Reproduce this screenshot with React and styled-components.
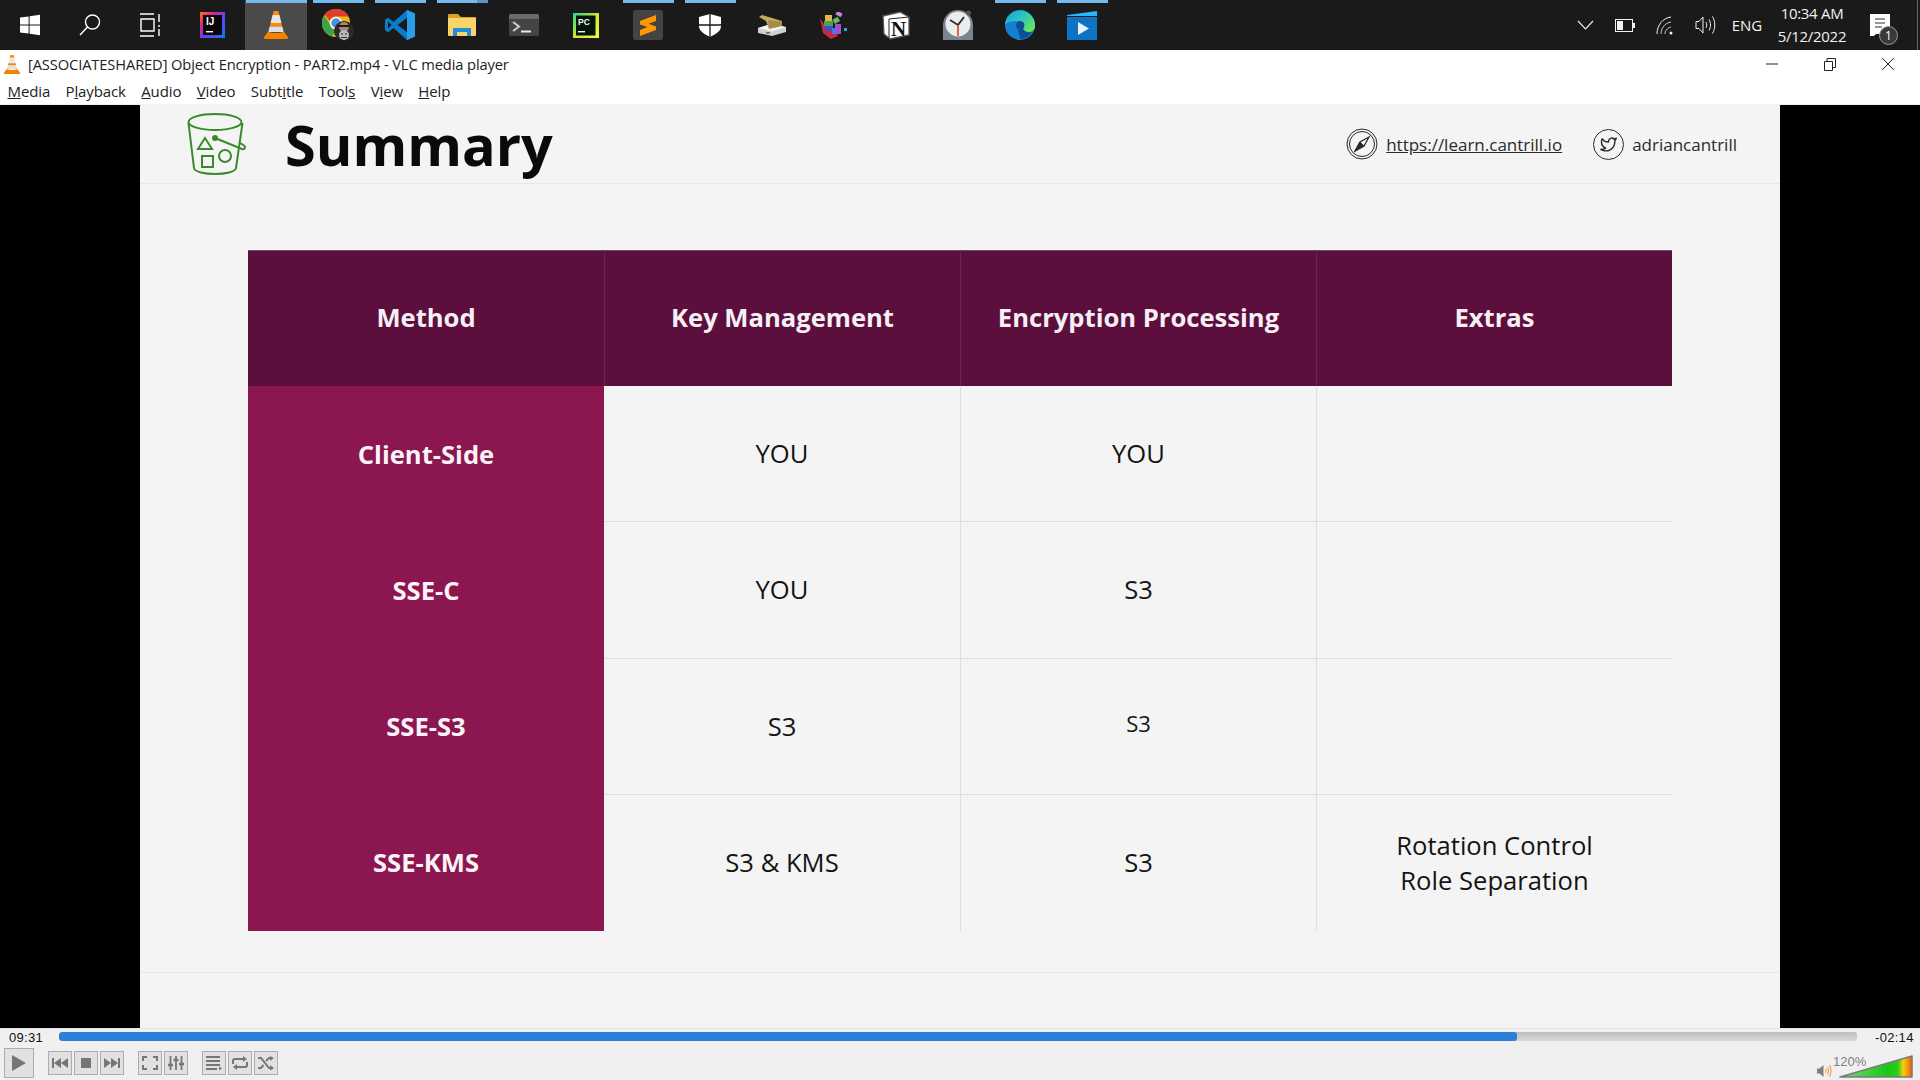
import React from "react";
import styled, { createGlobalStyle } from "styled-components";
import { FiTwitter } from "react-icons/fi";

const GlobalStyle = createGlobalStyle`
  html, body {
    margin: 0;
    padding: 0;
    width: 1920px;
    height: 1080px;
    overflow: hidden;
    background: #000;
    font-family: "Open Sans", "Noto Sans", sans-serif;
  }
`;

const Screen = styled.div`
  width: 1920px;
  height: 1080px;
  display: flex;
  flex-direction: column;
`;

/* ---------- windows taskbar ---------- */

const Taskbar = styled.div`
  height: 50px;
  flex: none;
  display: flex;
  background: #1a1a1a;
  color: #f2f2f2;
`;

const TaskSlot = styled.div`
  position: relative;
  flex: none;
  width: ${p => p.$w || 62}px;
  height: 50px;
  display: flex;
  align-items: center;
  justify-content: center;
  background: ${p => p.$active ? "#4a4a4a" : "transparent"};

  &::before {
    content: "";
    display: ${p => p.$running ? "block" : "none"};
    position: absolute;
    top: 0;
    left: ${p => p.$active ? 1 : 6}px;
    right: ${p => p.$active ? 0 : 5}px;
    height: 3px;
    background: ${p => p.$stacked
      ? "linear-gradient(90deg, #76b9ed 78%, #5a94c4 78%)"
      : "#76b9ed"};
  }
`;

const TaskSpacer = styled.div`
  flex: 1;
`;

const TrayItem = styled.div`
  flex: none;
  width: ${p => p.$w || 40}px;
  height: 50px;
  display: flex;
  align-items: center;
  justify-content: center;
  font-size: 15px;
`;

const Clock = styled.div`
  flex: none;
  width: 86px;
  display: flex;
  flex-direction: column;
  align-items: center;
  justify-content: center;
  font-size: 15px;
  line-height: 23px;
  letter-spacing: -0.3px;
`;

const TrayEnd = styled.div`
  flex: none;
  width: 1px;
  margin-left: 17px;
  margin-right: 2px;
  background: #666;
`;

const NotifyBadge = styled.span`
  position: absolute;
  right: 2px;
  bottom: 5px;
  width: 19px;
  height: 19px;
  border-radius: 50%;
  border: 1px solid #999;
  box-sizing: border-box;
  background: #3a3a3a;
  color: #fff;
  font-size: 12px;
  line-height: 17px;
  text-align: center;
`;

const NotifyWrap = styled.div`
  position: relative;
  width: 40px;
  height: 50px;
  flex: none;
  display: flex;
  align-items: center;
  justify-content: center;
  margin-left: 5px;
`;

const IconLabel = styled.text`
  font-family: "Liberation Sans", sans-serif;
  font-weight: 700;
`;

const WindowsIcon = () => (
  <svg width="22" height="22" viewBox="0 0 22 22" fill="#fff">
    <path d="M1 3.600 9.600 2.400v8H1zM10.600 2.300 21 .8v9.600H10.600zM1 11.500h8.600v8.100L1 18.400zM10.600 11.500H21v9.700l-10.400-1.500z" />
  </svg>
);

const SearchIcon = () => (
  <svg width="24" height="24" viewBox="0 0 24 24" fill="none" stroke="#fff" strokeWidth="1.400">
    <circle cx="14.500" cy="9" r="7" />
    <path d="M9.500 14 2 22" />
  </svg>
);

const TaskViewIcon = () => (
  <svg width="24" height="24" viewBox="0 0 24 24" fill="none" stroke="#fff" strokeWidth="1.400">
    <path d="M2 1h14M2 23h14M3 6h13v12H3zM21 1v8M21 12v2M21 16v7" />
  </svg>
);

const IdeaIcon = () => (
  <svg width="25" height="26" viewBox="0 0 25 26">
    <defs>
      <linearGradient id="ij" x1="0" y1="0" x2="1" y2="1">
        <stop offset="0" stopColor="#f97a12" />
        <stop offset="0.250" stopColor="#e8287a" />
        <stop offset="0.550" stopColor="#6a3df0" />
        <stop offset="1" stopColor="#087cfa" />
      </linearGradient>
    </defs>
    <rect width="25" height="26" fill="url(#ij)" />
    <rect x="3" y="3" width="19" height="20" fill="#0a0508" />
    <IconLabel x="6" y="13" fontSize="10" fill="#fff">IJ</IconLabel>
    <rect x="6" y="19" width="7" height="1.400" fill="#fff" />
  </svg>
);

const VlcIcon = ({ width = 26, height = 28 }) => (
  <svg width={width} height={height} viewBox="0 0 26 28">
    <path d="M10.700 0h4.600l1.200 4H9.500z" fill="#ff8800" />
    <path d="M9.500 4h7l1.900 8H7.600z" fill="#e6e6e6" />
    <path d="M7.600 12h10.800l.9 3.500H6.700z" fill="#ff8800" />
    <path d="M6.700 15.500h12.600l1.400 5.500H5.300z" fill="#e0e0e0" />
    <path d="M5.300 20.500 1 26c-.5.800 0 2 1 2h22c1 0 1.500-1.200 1-2l-4.300-5.500c-3 2-12.400 2-15.400 0z" fill="#f58300" />
  </svg>
);

const ChromeIcon = () => (
  <svg width="32" height="32" viewBox="0 0 32 32">
    <circle cx="14" cy="14" r="14" fill="#e8b90f" />
    <path d="M14 0a14 14 0 0 1 12.500 7.500H14a6.500 6.500 0 0 0-6 4.500L2.500 5.500A14 14 0 0 1 14 0z" fill="#e13c2e" />
    <path d="M2 6.500a14 14 0 0 0 8 21l5-7a6.500 6.500 0 0 1-7.500-6z" fill="#3ca24c" />
    <circle cx="14" cy="14" r="5.500" fill="#4a90e2" stroke="#fff" strokeWidth="1.500" />
    <circle cx="22" cy="22" r="10" fill="#2a2a2a" />
    <ellipse cx="22" cy="18" rx="5" ry="5" fill="#a98670" />
    <path d="M16 17h12" stroke="#1c1c1c" strokeWidth="2" />
    <ellipse cx="22" cy="26" rx="5" ry="5" fill="#b8b8b8" />
    <path d="M19 25h2M23 25h2M19 28.500h6" stroke="#333" strokeWidth="1.200" />
  </svg>
);

const VsCodeIcon = () => (
  <svg width="30" height="30" viewBox="0 0 30 30">
    <path d="M22 0l8 3.500v23L22 30 8.500 18 3 22.200 0 20.300V9.700L3 7.800 8.500 12z" fill="#0a7acb" />
    <path d="M22 8 12.500 15 22 22z" fill="#1a1a1a" />
    <path d="M3 11.500 6.500 15 3 18.500z" fill="#1a1a1a" />
    <path d="M22 0l8 3.500v23L22 30z" fill="#2a9ee8" />
    <path d="M22 8v14l-3-2.200V10.200z" fill="#1a1a1a" />
  </svg>
);

const FolderIcon = () => (
  <svg width="28" height="22" viewBox="0 0 28 22">
    <path d="M0 1a1 1 0 0 1 1-1h9l3 3h15v3H0z" fill="#d9a321" />
    <path d="M0 4h28v17a1 1 0 0 1-1 1H1a1 1 0 0 1-1-1z" fill="#fbd468" />
    <path d="M5 22v-8h18v8h-4v-4h-10v4z" fill="#1f8fdc" />
  </svg>
);

const TerminalIcon = () => (
  <svg width="30" height="22" viewBox="0 0 30 22">
    <rect width="30" height="22" rx="2" fill="#444" />
    <path d="M0 5V2a2 2 0 0 1 2-2h26a2 2 0 0 1 2 2v3z" fill="#6a6a6a" />
    <path d="M4 8l6 4.500L4 17" fill="none" stroke="#cfcfcf" strokeWidth="2" />
    <path d="M12 17.500h10" stroke="#e8e8e8" strokeWidth="2" />
  </svg>
);

const PyCharmIcon = () => (
  <svg width="26" height="25" viewBox="0 0 26 25">
    <defs>
      <linearGradient id="pc" x1="0" y1="0" x2="1" y2="1">
        <stop offset="0" stopColor="#21d789" />
        <stop offset="0.5" stopColor="#c8e83a" />
        <stop offset="1" stopColor="#fcf84a" />
      </linearGradient>
    </defs>
    <rect width="26" height="25" fill="url(#pc)" />
    <rect x="3" y="2.500" width="19.500" height="20" fill="#03140e" />
    <IconLabel x="5" y="12" fontSize="8.500" fill="#e8ffe8">PC</IconLabel>
    <rect x="5" y="18" width="7" height="1.400" fill="#fff" />
  </svg>
);

const SublimeIcon = () => (
  <svg width="30" height="30" viewBox="0 0 30 30">
    <rect width="30" height="30" rx="2.500" fill="#444" />
    <path d="M7 11 23 5v6l-7.500 2.700L23 16.500V20L7 26v-6l7.500-3L7 14.500z" fill="#ff9800" />
  </svg>
);

const ShieldIcon = () => (
  <svg width="22" height="23" viewBox="0 0 22 23">
    <path d="M0 3 11 0l11 3v9c0 5-5 8-11 11C5 20 0 17 0 12z" fill="#fff" />
    <path d="M11 0v23M0 11h22" stroke="#1a1a1a" strokeWidth="1.300" />
  </svg>
);

const DriveIcon = () => (
  <svg width="28" height="21" viewBox="0 0 28 21">
    <path d="M0 13 13 9l15 3v5L14 21 0 18z" fill="#d0d0d0" />
    <path d="M0 13l14 3.500L28 12 13 9z" fill="#f2f2f2" />
    <path d="M1 2 4 0l20 6v5l-13 3-3-8z" fill="#c9a860" />
    <path d="M10 5l14 1.500V11l-13 2.500z" fill="#a88c4a" />
    <rect x="8" y="17" width="4" height="1.600" fill="#2c8e4f" />
  </svg>
);

const BlocksIcon = () => (
  <svg width="28" height="27" viewBox="0 0 28 27">
    <path d="M0 6 3 21l8 6 7-3-2-4-9-3z" fill="#c7293f" />
    <rect x="5" y="3" width="7" height="6" fill="#e6b54a" />
    <rect x="4" y="9" width="9" height="5" fill="#44a453" />
    <rect x="5" y="14" width="8" height="5" fill="#3355cc" />
    <rect x="12" y="16" width="6" height="6" fill="#2f88dd" />
    <rect x="13" y="6" width="6" height="5" fill="#70b85d" transform="rotate(-30 16 8)" />
    <rect x="15" y="12" width="6" height="10" fill="#a14fd4" />
    <rect x="16" y="0" width="6" height="4" fill="#c884e4" transform="rotate(30 19 2)" />
    <rect x="24" y="16" width="3" height="3" fill="#19b6c9" />
  </svg>
);

const NotionIcon = () => (
  <svg width="28" height="29" viewBox="0 0 28 29">
    <path d="M1 5 18 1l9 5v18L8 28l-6-5z" fill="#fff" stroke="#555" strokeWidth="1.300" />
    <path d="M7 8l20-2M7 8v20" stroke="#222" strokeWidth="1" fill="none" />
    <text x="9" y="25" fontFamily="Liberation Serif, serif" fontWeight="700" fontSize="21" fill="#111">N</text>
  </svg>
);

const ClockIcon = () => (
  <svg width="30" height="30" viewBox="0 0 30 30">
    <path d="M0 30V15a15 15 0 0 1 30 0v15z" fill="#7a8590" />
    <circle cx="25.500" cy="3" r="2.500" fill="#555" />
    <circle cx="15" cy="14" r="12.500" fill="#ececec" />
    <path d="M15 15 7 10M15 15l6-8" stroke="#333" strokeWidth="2" />
    <path d="M15 15v11" stroke="#d8401a" strokeWidth="1.600" />
  </svg>
);

const EdgeIcon = () => (
  <svg width="30" height="30" viewBox="0 0 30 30">
    <defs>
      <linearGradient id="edgeTop" x1="0" y1="0" x2="1" y2="0.700">
        <stop offset="0" stopColor="#1b9de2" />
        <stop offset="0.550" stopColor="#2dc6c0" />
        <stop offset="1" stopColor="#6ae35c" />
      </linearGradient>
    </defs>
    <circle cx="15" cy="15" r="15" fill="#1580cf" />
    <path d="M0 15a15 15 0 0 1 30 1c0 4-3 6-7 6-3 0-5-1-5-3 2-3-1-8-6-8-6 0-11 2-12 4z" fill="url(#edgeTop)" />
    <path d="M18 19c-2 2-7 1-7-4 0-2 2-4 4-4 4 0 6 4 3 8 2 3 6 4 9 3-3 5-8 7-12 7 0-6-3-9-3-9 2 1 4 0 6-1z" fill="#0c4f94" />
  </svg>
);

const MediaIcon = () => (
  <svg width="30" height="29" viewBox="0 0 30 29">
    <path d="M0 4 30 0v5H0z" fill="#29b6f6" />
    <rect y="6" width="30" height="23" fill="#0f73c4" />
    <path d="M11 11l11 6.500L11 24z" fill="#e8f2fa" />
  </svg>
);

const ChevronIcon = () => (
  <svg width="17" height="10" viewBox="0 0 17 10" fill="none" stroke="#f2f2f2" strokeWidth="1.100">
    <path d="M1 1l7.500 8L16 1" />
  </svg>
);

const BatteryIcon = () => (
  <svg width="20" height="13" viewBox="0 0 20 13">
    <rect x=".5" y=".5" width="17" height="12" fill="none" stroke="#f2f2f2" />
    <rect x="2" y="2" width="6" height="9" fill="#f2f2f2" />
    <rect x="18" y="4" width="2" height="5" fill="#f2f2f2" />
  </svg>
);

const WifiIcon = () => (
  <svg width="18" height="19" viewBox="0 0 18 19" fill="none" stroke="#f2f2f2" strokeWidth="1">
    <path d="M1 18C1 9 7 2 15 1" />
    <path d="M5 18c0-6 4-11 10-12" opacity=".8" />
    <path d="M9 18c0-3 2-6 6-7" opacity=".8" />
    <circle cx="15" cy="17" r="1.500" fill="#f2f2f2" stroke="none" />
  </svg>
);

const SpeakerIcon = () => (
  <svg width="21" height="20" viewBox="0 0 21 20" fill="none" stroke="#f2f2f2" strokeWidth="1">
    <path d="M1 6.500h3L8 2v16l-4-4.500H1z" />
    <path d="M11 7c1 2 1 4 0 6M14 4.500c2 3.500 2 7.500 0 11M17.500 1.500c3 5 3 12 0 17" />
  </svg>
);

const NotifyIcon = () => (
  <svg width="21" height="22" viewBox="0 0 21 22">
    <path d="M0 0h20v20H6l-2 2H0z" fill="#fff" />
    <path d="M5 5h10M5 9h10M5 13h7" stroke="#333" strokeWidth="1.200" />
  </svg>
);

const taskIcons = [
  { key: "vlc", Icon: VlcIcon, active: true },
  { key: "chrome", Icon: ChromeIcon, running: true },
  { key: "vscode", Icon: VsCodeIcon, running: true },
  { key: "folder", Icon: FolderIcon, running: true, stacked: true },
  { key: "terminal", Icon: TerminalIcon },
  { key: "pycharm", Icon: PyCharmIcon },
  { key: "sublime", Icon: SublimeIcon, running: true },
  { key: "shield", Icon: ShieldIcon, running: true },
  { key: "drive", Icon: DriveIcon },
  { key: "blocks", Icon: BlocksIcon },
  { key: "notion", Icon: NotionIcon },
  { key: "clock", Icon: ClockIcon },
  { key: "edge", Icon: EdgeIcon, running: true },
  { key: "media", Icon: MediaIcon, running: true },
];

/* ---------- vlc window chrome ---------- */

const TitleBar = styled.div`
  height: 28px;
  flex: none;
  display: flex;
  align-items: center;
  background: #fff;
  color: #222;
  font-size: 14.7px;
  letter-spacing: -0.12px;
`;

const TitleLogo = styled.div`
  width: 28px;
  flex: none;
  display: flex;
  justify-content: center;
  padding-right: 4px;
  box-sizing: border-box;
`;

const WindowButtons = styled.div`
  margin-left: auto;
  padding-right: 3px;
  display: flex;
`;

const WindowButton = styled.div`
  width: 58px;
  height: 28px;
  display: flex;
  align-items: center;
  justify-content: center;
`;

const MenuBar = styled.div`
  height: 27px;
  flex: none;
  display: flex;
  align-items: center;
  gap: 15.4px;
  padding-left: 7.5px;
  box-sizing: border-box;
  background: #fff;
  border-bottom: 1px solid #f0f0f0;
  color: #222;
  font-size: 15px;
  letter-spacing: -0.12px;
`;

const MenuItem = styled.span``;

const menuItems = [
  ["", "M", "edia"],
  ["P", "l", "ayback"],
  ["", "A", "udio"],
  ["", "V", "ideo"],
  ["Subt", "i", "tle"],
  ["Tool", "s", ""],
  ["V", "i", "ew"],
  ["", "H", "elp"],
];

/* ---------- slide ---------- */

const VideoArea = styled.div`
  flex: 1;
  min-height: 0;
  display: flex;
  justify-content: center;
  background: #000;
`;

const Slide = styled.div`
  width: 1640px;
  display: flex;
  flex-direction: column;
  background: #f4f4f4;
`;

const SlideHeader = styled.header`
  height: 78px;
  flex: none;
  display: flex;
  align-items: center;
  padding-left: 47px;
  padding-right: 43px;
  border-bottom: 1px solid #e8e8e8;
`;

const SlideTitle = styled.h1`
  margin: 0 0 0 38px;
  font-size: 55.8px;
  line-height: 78px;
  font-weight: 700;
  color: #0a0a0a;
`;

const HeaderLinks = styled.div`
  margin-left: auto;
  display: flex;
  align-items: center;
  font-size: 17px;
  color: #2a2a2a;
`;

const HeaderLink = styled.span`
  display: flex;
  align-items: center;
  gap: 8px;
  margin-left: 31px;
`;

const LinkText = styled.span`
  text-decoration: ${p => p.$underline ? "underline" : "none"};
`;

const RoundIcon = styled.span`
  width: 31px;
  height: 31px;
  box-sizing: border-box;
  flex: none;
  border: 1.5px solid #2a2a2a;
  border-radius: 50%;
  display: flex;
  align-items: center;
  justify-content: center;
  font-size: 17px;
`;

const SummaryTable = styled.div`
  display: grid;
  grid-template-columns: repeat(4, 356px);
  grid-template-rows: repeat(5, 136.2px);
  margin: 66px 0 0 108px;
  flex: none;
`;

const HeadCell = styled.div`
  display: flex;
  align-items: center;
  justify-content: center;
  padding-bottom: 2px;
  box-sizing: border-box;
  background: #5c0f3d;
  color: #f6f0f4;
  font-size: 25.6px;
  font-weight: 700;
  border-left: ${p => p.$first ? "none" : "1px solid #6c2450"};
  border-top: 1px solid #6b5060;
`;

const MethodCell = styled.div`
  display: flex;
  align-items: center;
  justify-content: center;
  background: #8c1650;
  color: #fbf3f7;
  font-size: 25.6px;
  font-weight: 700;
`;

const BodyCell = styled.div`
  display: flex;
  flex-direction: column;
  align-items: center;
  justify-content: center;
  color: #141414;
  font-size: ${p => p.$small ? 22 : 25.6}px;
  line-height: 35px;
  padding-bottom: ${p => p.$small ? 6 : 0}px;
  border-left: ${p => p.$first ? "none" : "1px solid #dedede"};
  border-bottom: ${p => p.$lastRow ? "none" : "1px solid #dedede"};
`;

const SlideFooterLine = styled.div`
  margin-top: 41px;
  border-top: 1px solid #e8e8e8;
`;

const BucketIcon = () => (
  <svg width="60" height="64" viewBox="-1 -1 60 64" fill="none" stroke="#3a8a2c" strokeWidth="2">
    <ellipse cx="27" cy="9" rx="26.500" ry="8" />
    <path d="M.500 10 6 55c1 8 41 8 42 0l6.500-45" />
    <path d="M17 25l-7 11h14z" />
    <rect x="14" y="43" width="11" height="11" />
    <circle cx="37" cy="43" r="6" />
    <circle cx="27" cy="25" r="2" fill="#3a8a2c" />
    <path d="M27 25l27 11c3 1 4-2 2-3.500l-4-2.500" />
  </svg>
);

const CompassIcon = () => (
  <svg width="32" height="32" viewBox="0 0 32 32" fill="none" stroke="#2a2a2a" strokeWidth="1">
    <circle cx="16" cy="16" r="15" />
    <circle cx="16" cy="16" r="12.500" />
    <path d="M23 9l-9 5-5 9 9-5z" strokeWidth="1.300" />
    <path d="M14 14l4 4-9 5z" fill="#2a2a2a" />
  </svg>
);

const rows = [
  { method: "Client-Side", key: "YOU", processing: "YOU" },
  { method: "SSE-C", key: "YOU", processing: "S3" },
  { method: "SSE-S3", key: "S3", processing: "S3", small: true },
  { method: "SSE-KMS", key: "S3 & KMS", processing: "S3", extras: ["Rotation Control", "Role Separation"] },
];

/* ---------- player controls ---------- */

const Controls = styled.div`
  height: 52px;
  flex: none;
  display: flex;
  flex-direction: column;
  background: #f0f0f0;
  border-top: 1px solid #e4e4e4;
  box-sizing: border-box;
`;

const SeekRow = styled.div`
  height: 16px;
  flex: none;
  display: flex;
  align-items: center;
  font-size: 13px;
  color: #111;
  font-family: "Liberation Sans", sans-serif;
`;

const TimeLabel = styled.span`
  flex: none;
  width: ${p => p.$w}px;
  padding-left: ${p => p.$pad}px;
  box-sizing: border-box;
  letter-spacing: 0.3px;
`;

const SeekTrack = styled.div`
  flex: none;
  width: 1798px;
  height: 9px;
  margin-bottom: 1px;
  border-radius: 3px;
  background: linear-gradient(#bdbdbd, #d8d8d8);
  overflow: hidden;
`;

const SeekFill = styled.div`
  height: 100%;
  background: #2a7fd6;
  border-radius: 3px;
`;

const ButtonRow = styled.div`
  flex: 1;
  display: flex;
  align-items: flex-start;
  padding: 3px 0 0 4px;
`;

const PlayerButton = styled.div`
  flex: none;
  box-sizing: border-box;
  width: ${p => p.$big ? 30 : 24}px;
  height: ${p => p.$big ? 30 : 24}px;
  margin-top: ${p => p.$big ? 0 : 3}px;
  margin-right: ${p => p.$gap || 2}px;
  border: 1px solid #adadad;
  background: #e1e1e1;
  display: flex;
  align-items: center;
  justify-content: center;
`;

const VolumeWrap = styled.div`
  position: relative;
  margin-left: auto;
  margin-right: 7px;
  margin-top: 7px;
  display: flex;
  align-items: flex-end;
  gap: 7px;
`;

const VolumeText = styled.span`
  position: absolute;
  left: 16px;
  top: -1px;
  font-family: "Liberation Sans", sans-serif;
  font-size: 13px;
  color: #808080;
`;

const G = "#767676";

const PlayGlyph = () => <svg width="14" height="16" viewBox="0 0 14 16" fill={G}><path d="M0 0l14 8-14 8z" /></svg>;
const PrevGlyph = () => <svg width="16" height="10" viewBox="0 0 16 10" fill={G}><path d="M0 0h2v10H0zM2 5l7-5v10zM9 5l7-5v10z" /></svg>;
const StopGlyph = () => <svg width="10" height="10" viewBox="0 0 10 10" fill={G}><path d="M0 0h10v10H0z" /></svg>;
const NextGlyph = () => <svg width="16" height="10" viewBox="0 0 16 10" fill={G}><path d="M0 0l7 5-7 5zM7 0l7 5-7 5zM14 0h2v10h-2z" /></svg>;
const FullGlyph = () => (
  <svg width="16" height="14" viewBox="0 0 16 14" fill="none" stroke={G} strokeWidth="2">
    <path d="M1 5V1h4M11 1h4v4M15 9v4h-4M5 13H1V9" />
  </svg>
);
const ExtGlyph = () => (
  <svg width="16" height="14" viewBox="0 0 16 14" fill="none" stroke={G} strokeWidth="1.800">
    <path d="M2.500 0v14M8 0v14M13.500 0v14" />
    <path d="M0 9h5M5.500 4h5M11 8h5" strokeWidth="2.400" />
  </svg>
);
const ListGlyph = () => (
  <svg width="16" height="14" viewBox="0 0 16 14" fill={G}>
    <path d="M0 0h14v2H0zM0 4h14v2H0zM0 8h14v2H0zM0 12h11v2H0zM13 10.500l3 2-3 2z" />
  </svg>
);
const LoopGlyph = () => (
  <svg width="16" height="14" viewBox="0 0 16 14" fill="none" stroke={G} strokeWidth="2">
    <path d="M1 8V5a2 2 0 0 1 2-2h9M15 6v3a2 2 0 0 1-2 2H4" />
    <path d="M11 0l4 3-4 3zM5 8l-4 3 4 3z" fill={G} stroke="none" />
  </svg>
);
const ShuffleGlyph = () => (
  <svg width="16" height="14" viewBox="0 0 16 14" fill="none" stroke={G} strokeWidth="2">
    <path d="M0 2h3l8 10h2M0 12h3l2.500-3M8 5l3-3h2" />
    <path d="M12 0l4 2-4 3zM12 9l4 3-4 3z" fill={G} stroke="none" />
  </svg>
);

const VolumeIcon = () => (
  <svg width="15" height="14" viewBox="0 0 15 14" fill="none">
    <path d="M0 4.500h2.500L6.500 1v12L2.500 9.500H0z" fill="#808080" />
    <path d="M8.500 5c.7 1.300.7 2.700 0 4M10.500 3c1.300 2.500 1.300 5.500 0 8M12.500 1c2 3.700 2 8.300 0 12" stroke="#f09a20" strokeWidth="1" />
  </svg>
);

const VolumeBar = () => (
  <svg width="74" height="23" viewBox="0 0 74 23">
    <defs>
      <linearGradient id="vol" x1="0" y1="0" x2="1" y2="0">
        <stop offset="0" stopColor="#7ad87a" />
        <stop offset="0.66" stopColor="#18c818" />
        <stop offset="0.8" stopColor="#2ccc18" />
        <stop offset="0.88" stopColor="#f0d010" />
        <stop offset="1" stopColor="#f85a00" />
      </linearGradient>
    </defs>
    <path d="M1 22 73 1v21z" fill="url(#vol)" stroke="#7a7a7a" strokeWidth="1.500" strokeLinejoin="round" />
  </svg>
);

const PROGRESS = 81.1;

const App = () => (
  <Screen>
    <GlobalStyle />
    <Taskbar>
      <TaskSlot $w={60}><WindowsIcon /></TaskSlot>
      <TaskSlot $w={60}><SearchIcon /></TaskSlot>
      <TaskSlot $w={60}><TaskViewIcon /></TaskSlot>
      <TaskSlot $w={65}><IdeaIcon /></TaskSlot>
      {taskIcons.map(({ key, Icon, active, running, stacked }) => (
        <TaskSlot key={key} $active={active} $running={active || running} $stacked={stacked}><Icon /></TaskSlot>
      ))}
      <TaskSpacer />
      <TrayItem><ChevronIcon /></TrayItem>
      <TrayItem><BatteryIcon /></TrayItem>
      <TrayItem><WifiIcon /></TrayItem>
      <TrayItem><SpeakerIcon /></TrayItem>
      <TrayItem $w={44}>ENG</TrayItem>
      <Clock>
        <span>10:34 AM</span>
        <span>5/12/2022</span>
      </Clock>
      <NotifyWrap>
        <NotifyIcon />
        <NotifyBadge>1</NotifyBadge>
      </NotifyWrap>
      <TrayEnd />
    </Taskbar>

    <TitleBar>
      <TitleLogo><VlcIcon width={18} height={19} /></TitleLogo>
      [ASSOCIATESHARED] Object Encryption - PART2.mp4 - VLC media player
      <WindowButtons>
        <WindowButton>
          <svg width="12" height="2" viewBox="0 0 12 2"><path d="M0 1h12" stroke="#222" /></svg>
        </WindowButton>
        <WindowButton>
          <svg width="12" height="13" viewBox="0 0 12 13" fill="none" stroke="#222">
            <path d="M.500 3.500h8v9h-8zM3 3.500V.500h8.500v9h-3" />
          </svg>
        </WindowButton>
        <WindowButton>
          <svg width="14" height="14" viewBox="0 0 14 14" stroke="#222"><path d="M1 1l12 12M13 1 1 13" /></svg>
        </WindowButton>
      </WindowButtons>
    </TitleBar>

    <MenuBar>
      {menuItems.map(([before, mark, after]) => (
        <MenuItem key={before + mark + after}>{before}<u>{mark}</u>{after}</MenuItem>
      ))}
    </MenuBar>

    <VideoArea>
      <Slide>
        <SlideHeader>
          <BucketIcon />
          <SlideTitle>Summary</SlideTitle>
          <HeaderLinks>
            <HeaderLink>
              <CompassIcon />
              <LinkText $underline>https://learn.cantrill.io</LinkText>
            </HeaderLink>
            <HeaderLink>
              <RoundIcon><FiTwitter /></RoundIcon>
              <LinkText>adriancantrill</LinkText>
            </HeaderLink>
          </HeaderLinks>
        </SlideHeader>

        <SummaryTable>
          <HeadCell $first>Method</HeadCell>
          <HeadCell>Key Management</HeadCell>
          <HeadCell>Encryption Processing</HeadCell>
          <HeadCell>Extras</HeadCell>
          {rows.map((row, i) => {
            const lastRow = i === rows.length - 1;
            return (
              <React.Fragment key={row.method}>
                <MethodCell>{row.method}</MethodCell>
                <BodyCell $first $lastRow={lastRow}>{row.key}</BodyCell>
                <BodyCell $lastRow={lastRow} $small={row.small}>{row.processing}</BodyCell>
                <BodyCell $lastRow={lastRow}>
                  {row.extras && row.extras.map(line => <span key={line}>{line}</span>)}
                </BodyCell>
              </React.Fragment>
            );
          })}
        </SummaryTable>
        <SlideFooterLine />
      </Slide>
    </VideoArea>

    <Controls>
      <SeekRow>
        <TimeLabel $w={59} $pad={9}>09:31</TimeLabel>
        <SeekTrack>
          <SeekFill style={{ width: `${PROGRESS}%` }} />
        </SeekTrack>
        <TimeLabel $w={63} $pad={18}>-02:14</TimeLabel>
      </SeekRow>
      <ButtonRow>
        <PlayerButton $big $gap={14}><PlayGlyph /></PlayerButton>
        <PlayerButton><PrevGlyph /></PlayerButton>
        <PlayerButton><StopGlyph /></PlayerButton>
        <PlayerButton $gap={14}><NextGlyph /></PlayerButton>
        <PlayerButton><FullGlyph /></PlayerButton>
        <PlayerButton $gap={14}><ExtGlyph /></PlayerButton>
        <PlayerButton><ListGlyph /></PlayerButton>
        <PlayerButton><LoopGlyph /></PlayerButton>
        <PlayerButton><ShuffleGlyph /></PlayerButton>
        <VolumeWrap>
          <VolumeIcon />
          <VolumeText>120%</VolumeText>
          <VolumeBar />
        </VolumeWrap>
      </ButtonRow>
    </Controls>
  </Screen>
);

export default App;
